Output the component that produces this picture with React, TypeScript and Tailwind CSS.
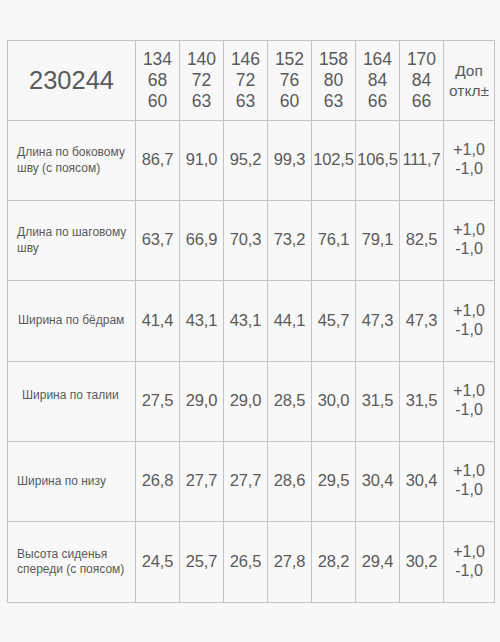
const sizes = [
  ['134', '68', '60'],
  ['140', '72', '63'],
  ['146', '72', '63'],
  ['152', '76', '60'],
  ['158', '80', '63'],
  ['164', '84', '66'],
  ['170', '84', '66'],
];

type Row = { label: string[]; values: string[]; h: string; indent: string };

const rows: Row[] = [
  { label: ['Длина по боковому', 'шву (с поясом)'], values: ['86,7', '91,0', '95,2', '99,3', '102,5', '106,5', '111,7'], h: 'h-[80px]', indent: 'pl-[9px]' },
  { label: ['Длина по шаговому', 'шву'], values: ['63,7', '66,9', '70,3', '73,2', '76,1', '79,1', '82,5'], h: 'h-[80px]', indent: 'pl-[9px]' },
  { label: ['Ширина по бёдрам'], values: ['41,4', '43,1', '43,1', '44,1', '45,7', '47,3', '47,3'], h: 'h-[81px]', indent: 'pl-[10px]' },
  { label: ['Ширина по талии'], values: ['27,5', '29,0', '29,0', '28,5', '30,0', '31,5', '31,5'], h: 'h-[80px]', indent: 'pl-[14px] pb-[12px]' },
  { label: ['Ширина по низу'], values: ['26,8', '27,7', '27,7', '28,6', '29,5', '30,4', '30,4'], h: 'h-[80px]', indent: 'pl-[9px]' },
  { label: ['Высота сиденья', 'спереди (с поясом)'], values: ['24,5', '25,7', '26,5', '27,8', '28,2', '29,4', '30,2'], h: 'h-[81px]', indent: 'pl-[9px]' },
];

export default function App() {
  return (
    <div className="w-[500px] h-[642px] bg-[#f8f8f8] pt-[40px] pl-[7px] text-[#5a5a5a] font-['Liberation_Sans',Arial,sans-serif]">
      <table className="border-collapse table-fixed w-[487px]">
        <colgroup>
          <col className="w-[128px]" />
          {sizes.map((_, i) => (
            <col key={i} className="w-[44px]" />
          ))}
          <col className="w-[51px]" />
        </colgroup>
        <thead>
          <tr className="h-[80px]">
            <th className="border border-[#c4c4c4] p-0 font-normal text-[25.5px] text-center align-middle">230244</th>
            {sizes.map((s, i) => (
              <th key={i} className="border border-[#c4c4c4] p-0 font-normal text-[17.5px] leading-[20.7px] text-center align-middle">
                {s.map((v) => (
                  <div key={v}>{v}</div>
                ))}
              </th>
            ))}
            <th className="border border-[#c4c4c4] p-0 font-normal text-[15.5px] leading-[19.5px] text-center align-middle">
              <div>Доп</div>
              <div>откл±</div>
            </th>
          </tr>
        </thead>
        <tbody>
          {rows.map((r) => (
            <tr key={r.label[0]} className={r.h}>
              <td className={`border border-[#c4c4c4] p-0 ${r.indent} text-[12px] leading-[15.3px] text-left align-middle`}>
                {r.label.map((l) => (
                  <div key={l}>{l}</div>
                ))}
              </td>
              {r.values.map((v, i) => (
                <td key={i} className="border border-[#c4c4c4] p-0 pb-[2px] text-[16.5px] tracking-[-0.2px] text-center align-middle whitespace-nowrap">
                  {v}
                </td>
              ))}
              <td className="border border-[#c4c4c4] p-0 pb-[3px] text-[16px] leading-[19px] text-center align-middle">
                <div>+1,0</div>
                <div>-1,0</div>
              </td>
            </tr>
          ))}
        </tbody>
      </table>
    </div>
  );
}
